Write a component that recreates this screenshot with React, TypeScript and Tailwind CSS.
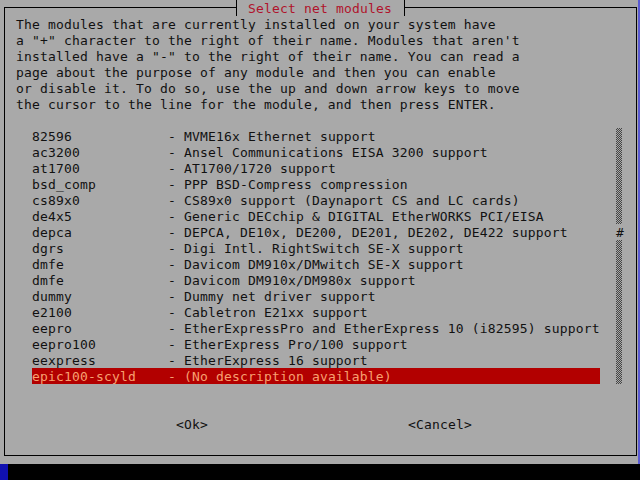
import React from 'react';

const intro = [
  'The modules that are currently installed on your system have',
  'a "+" character to the right of their name. Modules that aren\'t',
  'installed have a "-" to the right of their name. You can read a',
  'page about the purpose of any module and then you can enable',
  'or disable it. To do so, use the up and down arrow keys to move',
  'the cursor to the line for the module, and then press ENTER.',
];

const modules: [string, string][] = [
  ['82596', 'MVME16x Ethernet support'],
  ['ac3200', 'Ansel Communications EISA 3200 support'],
  ['at1700', 'AT1700/1720 support'],
  ['bsd_comp', 'PPP BSD-Compress compression'],
  ['cs89x0', 'CS89x0 support (Daynaport CS and LC cards)'],
  ['de4x5', 'Generic DECchip & DIGITAL EtherWORKS PCI/EISA'],
  ['depca', 'DEPCA, DE10x, DE200, DE201, DE202, DE422 support'],
  ['dgrs', 'Digi Intl. RightSwitch SE-X support'],
  ['dmfe', 'Davicom DM910x/DMwitch SE-X support'],
  ['dmfe', 'Davicom DM910x/DM980x support'],
  ['dummy', 'Dummy net driver support'],
  ['e2100', 'Cabletron E21xx support'],
  ['eepro', 'EtherExpressPro and EtherExpress 10 (i82595) support'],
  ['eepro100', 'EtherExpress Pro/100 support'],
  ['eexpress', 'EtherExpress 16 support'],
  ['epic100-scyld', '(No description available)'],
];

const SELECTED = 15;
const THUMB = 6;

const App: React.FC = () => {
  return (
    <div
      className="w-[640px] h-[480px] flex flex-col bg-[#a9a9a9] text-[#111] text-[13px] leading-[16px] tracking-[0.17px] overflow-hidden"
      style={{ fontFamily: '"DejaVu Sans Mono", "Liberation Mono", monospace' }}
    >
      {/* screen area */}
      <div className="h-[464px] flex">
        <div className="flex-1">
          <div className="ml-[4px] mt-[7px] w-[633px] h-[449px] border border-black relative">
            {/* title on the top border */}
            <div className="absolute left-[227px] top-[-8px] h-[16px] flex">
              <div className="w-[8px] h-[16px] flex">
                <div className="w-[4px]" />
                <div className="w-[4px] bg-[#a9a9a9] border-l border-black" />
              </div>
              <div className="bg-[#a9a9a9] text-[#b0142c] whitespace-pre w-[160px] h-[16px] pt-[1px]"> Select net modules </div>
              <div className="w-[8px] h-[16px] flex">
                <div className="w-[5px] bg-[#a9a9a9] border-r border-black" />
                <div className="w-[3px]" />
              </div>
            </div>

            <div className="pl-[11px] pt-[8px] flex flex-col">
              {intro.map((line, i) => (
                <div key={i} className="h-[16px] pt-[1px] whitespace-pre">{line}</div>
              ))}
              <div className="h-[16px]" />

              {/* module list + scrollbar */}
              <div className="flex pl-[16px]">
                <div className="w-[568px] flex flex-col">
                  {modules.map(([name, desc], i) => (
                    <div
                      key={i}
                      className={
                        i === SELECTED
                          ? 'h-[16px] pt-[1px] whitespace-pre bg-[#b20000] text-[#f8a070]'
                          : 'h-[16px] pt-[1px] whitespace-pre'
                      }
                    >
                      {name.padEnd(17, ' ') + '- ' + desc}
                    </div>
                  ))}
                </div>
                <div className="ml-[16px] w-[8px] flex flex-col">
                  {modules.map((_, i) =>
                    i === THUMB ? (
                      <div key={i} className="h-[16px] pt-[1px] whitespace-pre">#</div>
                    ) : (
                      <div
                        key={i}
                        className="h-[16px] w-[6px] bg-[repeating-conic-gradient(#444_0_25%,transparent_0_50%)] bg-[length:2px_2px]"
                      />
                    )
                  )}
                </div>
              </div>

              <div className="h-[32px]" />
              {/* buttons */}
              <div className="h-[16px] pt-[1px] flex whitespace-pre">
                <div className="ml-[160px] w-[32px]">&lt;Ok&gt;</div>
                <div className="ml-[200px]">&lt;Cancel&gt;</div>
              </div>
            </div>
          </div>
        </div>
        <div className="w-[2px] bg-[#5a5ad2]" />
      </div>

      {/* bottom status line */}
      <div className="h-[16px] bg-black flex">
        <div className="w-[8px] bg-[#1010b0]" />
      </div>
    </div>
  );
};

export default App;
